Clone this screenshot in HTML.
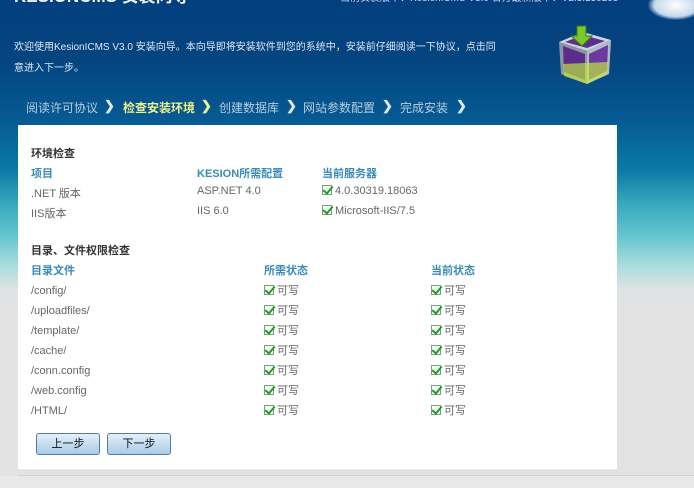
<!DOCTYPE html>
<html><head><meta charset="utf-8"><style>
*{margin:0;padding:0;box-sizing:border-box}
body{width:694px;height:488px;overflow:hidden;position:relative;font-family:"Liberation Sans","Noto Sans CJK SC",sans-serif;font-size:11px;
background:linear-gradient(to bottom,#033f80 0px,#04447f 60px,#065a93 120px,#0a7aa6 170px,#3aaabd 205px,#63c4cf 235px,#a8dcdc 265px,#dfe3e3 290px,#e3e3e3 320px,#e3e3e3 100%)}
.a{position:absolute;white-space:nowrap}
.w{color:#dfe8f2}
.box{position:absolute;left:18px;top:125px;width:599px;height:344px;background:#fff}
.line{position:absolute;left:18px;top:475px;width:676px;height:1px;background:#d0d0d0}
.bot{position:absolute;left:0;top:476px;width:694px;height:12px;background:#e9e9e9}
.t{color:#333;font-weight:bold;font-size:11px}
.h{color:#3a8ab8;font-weight:bold;font-size:11px}
.g{color:#666;font-size:11px}
.ck{display:inline-block;width:10px;height:10px;border:1px solid #7aa07a;position:relative;vertical-align:-1px;margin-right:3px;background:#f4fff4}
.ck:after{content:"";position:absolute;left:2px;top:-2px;width:4px;height:8px;border:solid #1f9a2a;border-width:0 2px 2px 0;transform:rotate(40deg)}
.btn{position:absolute;top:433px;width:64px;height:22px;border:1px solid #5a7a9a;border-radius:3px;background:linear-gradient(#e4f0fa,#a9cbe8);font-size:11px;text-align:center;line-height:20px;color:#111}
.nav{font-size:12px;color:#b8cde0;top:99px}
.arr{color:#dbe7f1;font-weight:bold;font-size:13px;top:98px}
</style></head><body>
<div class="a" style="left:14px;top:-18px;font-size:17px;font-weight:bold;color:#f0f4f8">KESIONCMS 安装向导</div>
<div class="a" style="left:340px;top:-11px;font-size:10px;color:#c8d8ea">当前安装版本：KesionICMS V3.0 官方最新版本：V2.5.150205</div>
<div class="a" style="left:648px;top:-10px;width:56px;height:30px;border-radius:50%;background:radial-gradient(#ffffff,#c4d8ea 55%,rgba(4,68,127,0) 72%)"></div>
<div class="a w" style="left:14px;top:37px;font-size:10px;line-height:21px;">欢迎使用KesionICMS V3.0 安装向导。本向导即将安装软件到您的系统中，安装前仔细阅读一下协议，点击同<br>意进入下一步。</div>
<svg class="a" style="left:553px;top:24px" width="62" height="64" viewBox="0 0 62 64">
<polygon points="6,18 30,8 58,16 34,27" fill="#cfd4dc"/>
<polygon points="12,18 30,11 52,17 34,24" fill="#5b2f8f"/>
<polygon points="6,18 34,27 34,60 8,50" fill="#8d93a0"/>
<polygon points="34,27 58,16 56,50 34,60" fill="#b4bac4"/>
<polygon points="10,22 32,30 32,56 11,48" fill="#5a2d8d"/>
<polygon points="36,30 55,21 54,47 36,56" fill="#6a3aa0"/>
<polygon points="10,40 55,38 54,50 34,60 11,52" fill="#c6f03a" opacity=".65"/>
<polygon points="24,2 33,2 33,12 39,12 29,22 18,12 24,12" fill="#7cc82a" stroke="#3d7a10" stroke-width="1"/>
</svg>
<div class="a nav" style="left:26px">阅读许可协议</div><div class="a arr" style="left:104px">❯</div>
<div class="a nav" style="left:123px;color:#eef38a;font-weight:bold">检查安装环境</div><div class="a arr" style="left:201px;color:#eef38a">❯</div>
<div class="a nav" style="left:219px">创建数据库</div><div class="a arr" style="left:286px">❯</div>
<div class="a nav" style="left:303px">网站参数配置</div><div class="a arr" style="left:382px">❯</div>
<div class="a nav" style="left:400px">完成安装</div><div class="a arr" style="left:456px">❯</div>
<div class="box"></div>
<div class="a t" style="left:31px;top:145px">环境检查</div>
<div class="a h" style="left:31px;top:165px">项目</div><div class="a h" style="left:197px;top:165px">KESION所需配置</div><div class="a h" style="left:322px;top:165px">当前服务器</div>
<div class="a g" style="left:31px;top:185px">.NET 版本</div><div class="a g" style="left:197px;top:185px">ASP.NET 4.0</div><div class="a g" style="left:322px;top:185px"><span class="ck"></span>4.0.30319.18063</div>
<div class="a g" style="left:31px;top:205px">IIS版本</div><div class="a g" style="left:197px;top:205px">IIS 6.0</div><div class="a g" style="left:322px;top:205px"><span class="ck"></span>Microsoft-IIS/7.5</div>
<div class="a t" style="left:31px;top:242px">目录、文件权限检查</div>
<div class="a h" style="left:31px;top:262px">目录文件</div><div class="a h" style="left:264px;top:262px">所需状态</div><div class="a h" style="left:431px;top:262px">当前状态</div>
<div class="a g" style="left:31px;top:281px;line-height:20px">/config/<br>/uploadfiles/<br>/template/<br>/cache/<br>/conn.config<br>/web.config<br>/HTML/</div>
<div class="a g" style="left:264px;top:281px;line-height:20px"><span class="ck"></span>可写<br><span class="ck"></span>可写<br><span class="ck"></span>可写<br><span class="ck"></span>可写<br><span class="ck"></span>可写<br><span class="ck"></span>可写<br><span class="ck"></span>可写</div>
<div class="a g" style="left:431px;top:281px;line-height:20px"><span class="ck"></span>可写<br><span class="ck"></span>可写<br><span class="ck"></span>可写<br><span class="ck"></span>可写<br><span class="ck"></span>可写<br><span class="ck"></span>可写<br><span class="ck"></span>可写</div>
<div class="btn" style="left:36px">上一步</div>
<div class="btn" style="left:107px">下一步</div>
<div class="line"></div><div class="bot"></div>
</body></html>
